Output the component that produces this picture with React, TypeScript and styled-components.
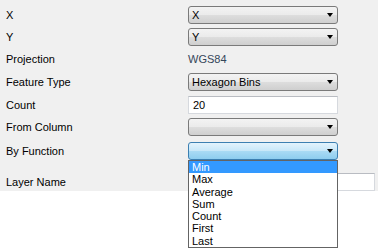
import styled, { createGlobalStyle } from "styled-components";

const GlobalStyle = createGlobalStyle`
  html, body {
    margin: 0;
    padding: 0;
    background: #ffffff;
  }
  body {
    font-family: "Liberation Sans", Arial, sans-serif;
    font-size: 11px;
    color: #000;
  }
`;

const StyledForm = styled.div`
  background: #f0f0f0;
  padding: 4px 0 0 6px;
  box-sizing: border-box;
`;

const StyledRow = styled.div<{ $h: number }>`
  display: flex;
  align-items: flex-start;
  height: ${(p) => p.$h}px;
  padding-top: 2px;
  box-sizing: border-box;
`;

const StyledLabel = styled.div`
  width: 182px;
  flex: none;
  line-height: 18px;
  white-space: nowrap;
`;

const StyledField = styled.div`
  position: relative;
  width: 150px;
`;

const StyledCombo = styled.div<{ $active?: boolean }>`
  position: relative;
  height: 18px;
  box-sizing: border-box;
  border: 1px solid ${(p) => (p.$active ? "#3c7fb1" : "#7a7a7a")};
  border-radius: 3px;
  padding-left: 3px;
  line-height: 16px;
  background: ${(p) =>
    p.$active
      ? "linear-gradient(#e3f3fc 0%, #c8e7f8 48%, #a9daf4 52%, #8ecdef 100%)"
      : "linear-gradient(#f3f3f3 0%, #ebebeb 48%, #dddddd 52%, #cfcfcf 100%)"};
`;

const StyledArrow = styled.span`
  position: absolute;
  right: 4px;
  top: 6px;
  width: 0;
  height: 0;
  border-left: 3.5px solid transparent;
  border-right: 3.5px solid transparent;
  border-top: 4px solid #000;
`;

const StyledTextBox = styled.div<{ $wide?: boolean }>`
  width: ${(p) => (p.$wide ? 187 : 150)}px;
  height: 18px;
  box-sizing: border-box;
  background: #fff;
  border: 1px solid #d6d9de;
  border-top-color: #b9bcc2;
  padding-left: 4px;
  line-height: 16px;
`;

const StyledValue = styled.div`
  line-height: 18px;
  color: #34465a;
`;

const StyledList = styled.div`
  position: absolute;
  top: 18px;
  left: 0;
  width: 150px;
  box-sizing: border-box;
  background: #fff;
  border: 1px solid #646464;
  z-index: 2;
`;

const StyledOption = styled.div<{ $selected?: boolean }>`
  height: 12.28px;
  line-height: 12.28px;
  padding-left: 3px;
  background: ${(p) => (p.$selected ? "#3399ff" : "transparent")};
  color: ${(p) => (p.$selected ? "#fff" : "#000")};
`;

const StyledBottom = styled.div`
  height: 57px;
  background: #fff;
`;

const functions = ["Min", "Max", "Average", "Sum", "Count", "First", "Last"];

function Combo({ value, active }: { value?: string; active?: boolean }) {
  return (
    <StyledCombo $active={active}>
      {value}
      <StyledArrow />
    </StyledCombo>
  );
}

export default function App() {
  return (
    <>
      <GlobalStyle />
      <StyledForm>
        <StyledRow $h={22}>
          <StyledLabel>X</StyledLabel>
          <StyledField>
            <Combo value="X" />
          </StyledField>
        </StyledRow>
        <StyledRow $h={22}>
          <StyledLabel>Y</StyledLabel>
          <StyledField>
            <Combo value="Y" />
          </StyledField>
        </StyledRow>
        <StyledRow $h={23}>
          <StyledLabel>Projection</StyledLabel>
          <StyledValue>WGS84</StyledValue>
        </StyledRow>
        <StyledRow $h={23}>
          <StyledLabel>Feature Type</StyledLabel>
          <StyledField>
            <Combo value="Hexagon Bins" />
          </StyledField>
        </StyledRow>
        <StyledRow $h={22}>
          <StyledLabel>Count</StyledLabel>
          <StyledTextBox>20</StyledTextBox>
        </StyledRow>
        <StyledRow $h={24}>
          <StyledLabel>From Column</StyledLabel>
          <StyledField>
            <Combo />
          </StyledField>
        </StyledRow>
        <StyledRow $h={31}>
          <StyledLabel>By Function</StyledLabel>
          <StyledField>
            <Combo active />
            <StyledList>
              {functions.map((f, i) => (
                <StyledOption key={f} $selected={i === 0}>
                  {f}
                </StyledOption>
              ))}
            </StyledList>
          </StyledField>
        </StyledRow>
        <StyledRow $h={20}>
          <StyledLabel>Layer Name</StyledLabel>
          <StyledTextBox $wide />
        </StyledRow>
      </StyledForm>
      <StyledBottom />
    </>
  );
}
